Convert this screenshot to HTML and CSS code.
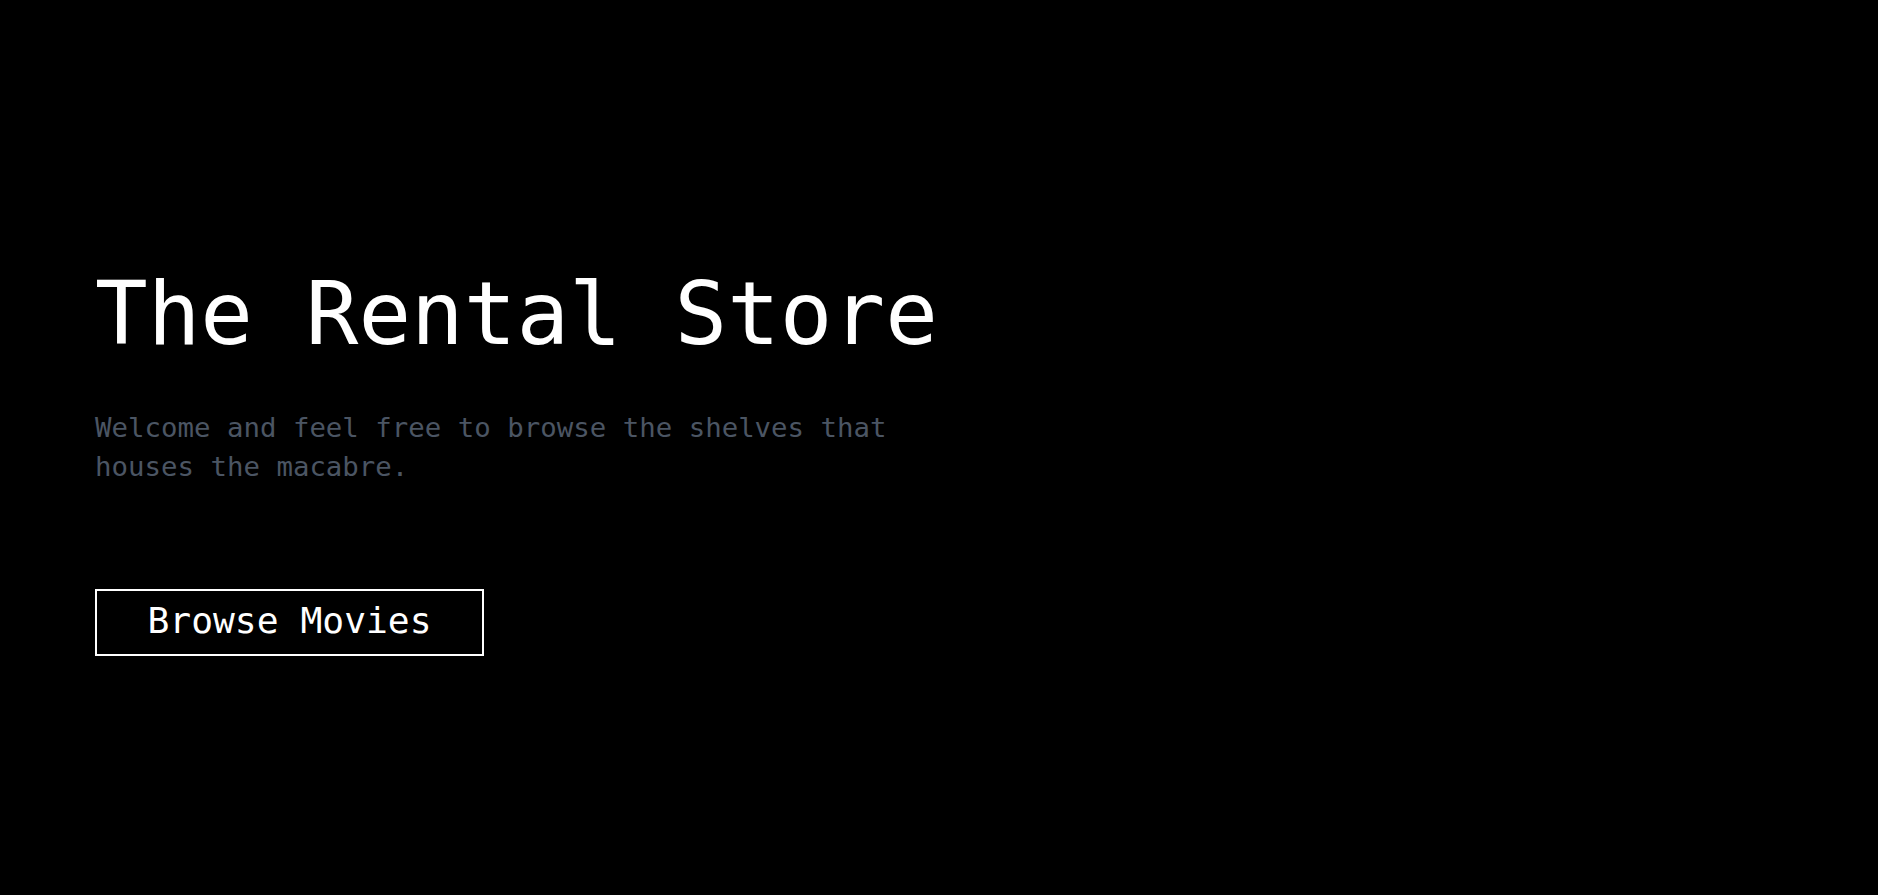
FILE: index.html
```html
<!DOCTYPE html>
<html lang="en">
<head>
<meta charset="utf-8">
<title>The Rental Store</title>
<link rel="stylesheet" href="styles.css">
</head>
<body>
<main class="hero">
  <h1 class="hero-title">The Rental Store</h1>
  <p class="hero-text">Welcome and feel free to browse the shelves that houses the macabre.</p>
  <a class="hero-button" href="#">Browse Movies</a>
</main>
</body>
</html>
```
FILE: styles.css
```css
html, body {
  margin: 0;
  padding: 0;
  background: #000;
}
body {
  height: 895px;
  overflow: hidden;
  font-family: "DejaVu Sans Mono", "Liberation Mono", monospace;
}
.hero {
  display: flex;
  flex-direction: column;
  align-items: flex-start;
  padding: 262px 0 0 95px;
}
.hero-title {
  margin: 0;
  color: #fff;
  font-weight: normal;
  font-size: 87.5px;
  line-height: 104px;
  letter-spacing: 0;
}
.hero-text {
  margin: 42px 0 0 0;
  max-width: 820px;
  color: #4b5563;
  font-size: 27.4px;
  line-height: 39px;
}
.hero-button {
  margin-top: 103px;
  display: block;
  box-sizing: border-box;
  width: 389px;
  padding: 8px 0 12px 0;
  border: 2px solid #fff;
  color: #fff;
  text-decoration: none;
  text-align: center;
  font-size: 36.3px;
  line-height: 43px;
}
```
